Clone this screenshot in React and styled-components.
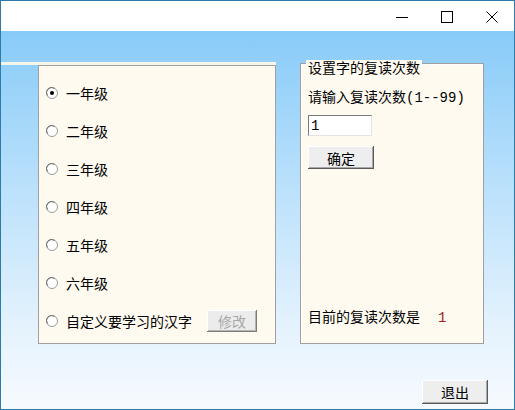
import React from 'react';
import styled, { createGlobalStyle } from 'styled-components';

const GlobalStyle = createGlobalStyle`
  html, body {
    margin: 0;
    padding: 0;
    background: #ffffff;
  }
  body {
    font-family: "Liberation Mono", "Noto Sans CJK SC", monospace;
    font-size: 14px;
    color: #000;
  }
`;

const grades = ['一年级', '二年级', '三年级', '四年级', '五年级', '六年级'];

const Radio = ({ checked }) => (
    <svg width="12" height="12" viewBox="0 0 12 12">
        <circle cx="6" cy="6" r="5.5" fill="#ffffff" stroke="#9a9a9a" />
        <path d="M1.5 8.5 A5 5 0 0 1 8.5 1.5" fill="none" stroke="#6f6f6f" />
        {checked && <circle cx="6" cy="6" r="2" fill="#000" />}
    </svg>
);

const App = () => {
    return (
        <Window>
            <GlobalStyle />
            <TitleBar>
                <Control>
                    <svg width="12" height="12" viewBox="0 0 12 12">
                        <line x1="0" y1="6.5" x2="12" y2="6.5" stroke="#000" />
                    </svg>
                </Control>
                <Control>
                    <svg width="12" height="12" viewBox="0 0 12 12">
                        <rect x="0.5" y="0.5" width="11" height="11" fill="none" stroke="#000" />
                    </svg>
                </Control>
                <Control>
                    <svg width="12" height="12" viewBox="0 0 12 12">
                        <path d="M0.5 0.5 L11.5 11.5 M11.5 0.5 L0.5 11.5" stroke="#000" />
                    </svg>
                </Control>
            </TitleBar>

            <Client>
                <Main>
                    <LeftArea>
                        <TopStrip />
                        <GradePanel>
                            {grades.map((g, i) => (
                                <RadioRow key={g}>
                                    <Radio checked={i === 0} />
                                    <span>{g}</span>
                                </RadioRow>
                            ))}
                            <RadioRow>
                                <Radio />
                                <span>自定义要学习的汉字</span>
                                <SmallButton disabled>修改</SmallButton>
                            </RadioRow>
                        </GradePanel>
                    </LeftArea>

                    <GroupBox>
                        <Caption>设置字的复读次数</Caption>
                        <Label>请输入复读次数(1--99)</Label>
                        <NumberInput defaultValue="1" />
                        <Button $w={66} $h={23}>确定</Button>
                        <Current>
                            目前的复读次数是<Count>1</Count>
                        </Current>
                    </GroupBox>
                </Main>

                <Footer>
                    <Button $w={66} $h={24}>退出</Button>
                </Footer>
            </Client>
        </Window>
    );
};

const Window = styled.div`
  width: 515px;
  height: 410px;
  box-sizing: border-box;
  border: 1px solid #2b7bab;
  display: flex;
  flex-direction: column;
  overflow: hidden;
`;

const TitleBar = styled.div`
  height: 30px;
  flex-shrink: 0;
  background: #ffffff;
  display: flex;
  justify-content: flex-end;
  align-items: center;
`;

const Control = styled.div`
  width: 45px;
  height: 30px;
  display: flex;
  align-items: center;
  justify-content: center;
  padding-top: 1px;
  box-sizing: border-box;
`;

const Client = styled.div`
  flex: 1;
  display: flex;
  flex-direction: column;
  background: linear-gradient(to bottom, #88cbf8 0%, #b9e0fb 40%, #e6f3fd 80%, #f6fafe 100%);
  padding-top: 31px;
`;

const Main = styled.div`
  display: flex;
  align-items: flex-start;
`;

const LeftArea = styled.div`
  width: 275px;
  display: flex;
  flex-direction: column;
`;

const TopStrip = styled.div`
  height: 3px;
  background: #f6f5ea;
`;

const GradePanel = styled.div`
  margin-left: 37px;
  height: 279px;
  box-sizing: border-box;
  border: 1px solid #a0a0a0;
  background: #fffaf0;
  padding: 8px 0 0 7px;
  display: flex;
  flex-direction: column;
`;

const RadioRow = styled.div`
  height: 38px;
  display: flex;
  align-items: center;
  gap: 8px;
  font-family: "Noto Sans CJK SC", sans-serif;
  font-size: 14px;
  line-height: 20px;

  svg {
    flex-shrink: 0;
  }
`;

const GroupBox = styled.div`
  position: relative;
  margin-left: 24px;
  margin-top: 1px;
  width: 184px;
  height: 281px;
  box-sizing: border-box;
  border: 1px solid #a0a0a0;
  box-shadow: inset 1px 1px #ffffff;
  background: #fffaf0;
  padding: 24px 0 15px 7px;
  display: flex;
  flex-direction: column;
  align-items: flex-start;
`;

const Caption = styled.div`
  position: absolute;
  left: 5px;
  top: -4px;
  padding: 0 2px;
  background: #fffaf0;
  font-family: "Noto Sans CJK SC", sans-serif;
  font-size: 14px;
  line-height: 15px;
`;

const Label = styled.div`
  line-height: 20px;
  white-space: nowrap;
`;

const NumberInput = styled.input`
  margin: 7px 0 0 0;
  width: 64px;
  height: 21px;
  box-sizing: border-box;
  border: 1px solid;
  border-color: #7a7a7a #e3e3e3 #e3e3e3 #7a7a7a;
  background: #ffffff;
  padding: 0 2px;
  font-family: "Liberation Mono", monospace;
  font-size: 14px;
  outline: none;
`;

const Button = styled.button`
  width: ${p => p.$w}px;
  height: ${p => p.$h}px;
  margin-top: 10px;
  padding: 0;
  border: none;
  background: #eeeeee;
  box-shadow: inset -1px -1px #5a5a5a, inset 1px 1px #ffffff, inset -2px -2px #a8a8a8;
  font-family: "Noto Sans CJK SC", sans-serif;
  font-size: 14px;
  color: #000;
`;

const SmallButton = styled.button`
  width: 50px;
  height: 22px;
  margin-left: 7px;
  padding: 0;
  border: none;
  background: #ececec;
  box-shadow: inset -1px -1px #7c7c7c, inset 1px 1px #ffffff, inset -2px -2px #b4b4b4;
  font-family: "Noto Sans CJK SC", sans-serif;
  font-size: 14px;
  color: #a8a8a8;
`;

const Current = styled.div`
  margin-top: auto;
  line-height: 20px;
  font-family: "Noto Sans CJK SC", sans-serif;
  white-space: nowrap;
`;

const Count = styled.span`
  margin-left: 18px;
  color: #a02020;
  font-family: "Liberation Mono", monospace;
`;

const Footer = styled.div`
  margin-top: auto;
  display: flex;
  justify-content: flex-end;
  padding: 0 26px 5px 0;

  button {
    margin-top: 0;
  }
`;

export default App;
